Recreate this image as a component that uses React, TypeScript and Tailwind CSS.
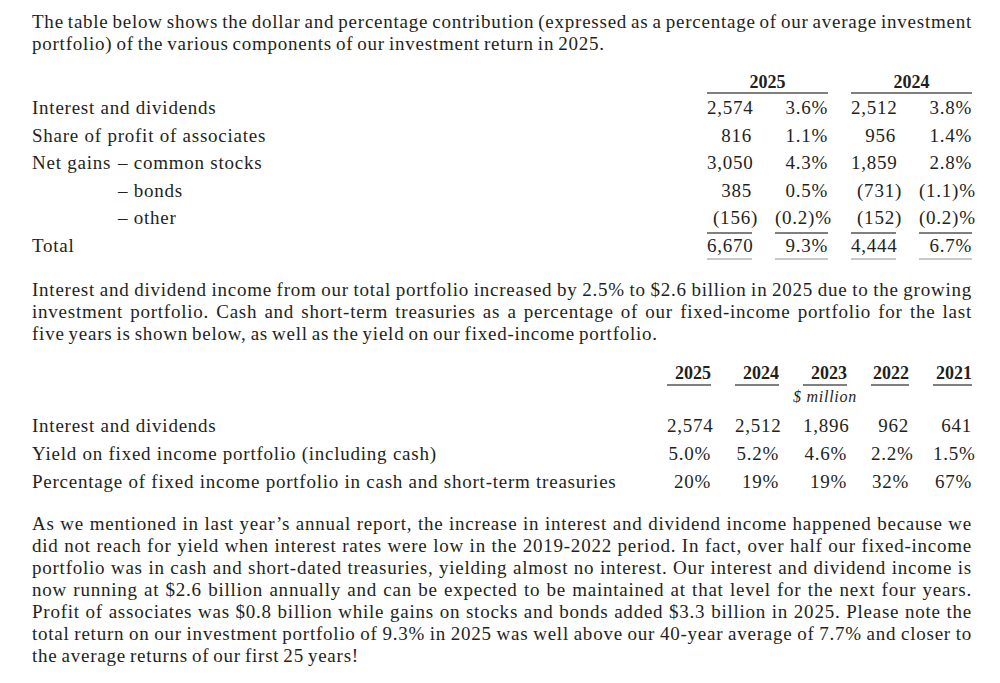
import React from "react";

const intro = [
  "The table below shows the dollar and percentage contribution (expressed as a percentage of our average investment",
  "portfolio) of the various components of our investment return in 2025.",
];

const middle = [
  "Interest and dividend income from our total portfolio increased by 2.5% to $2.6 billion in 2025 due to the growing",
  "investment portfolio. Cash and short-term treasuries as a percentage of our fixed-income portfolio for the last",
  "five years is shown below, as well as the yield on our fixed-income portfolio.",
];

const closing = [
  "As we mentioned in last year\u2019s annual report, the increase in interest and dividend income happened because we",
  "did not reach for yield when interest rates were low in the 2019-2022 period. In fact, over half our fixed-income",
  "portfolio was in cash and short-dated treasuries, yielding almost no interest. Our interest and dividend income is",
  "now running at $2.6 billion annually and can be expected to be maintained at that level for the next four years.",
  "Profit of associates was $0.8 billion while gains on stocks and bonds added $3.3 billion in 2025. Please note the",
  "total return on our investment portfolio of 9.3% in 2025 was well above our 40-year average of 7.7% and closer to",
  "the average returns of our first 25 years!",
];

const contribution = [
  { label: "Interest and dividends", indent: false, values: ["2,574", "3.6%", "2,512", "3.8%"] },
  { label: "Share of profit of associates", indent: false, values: ["816", "1.1%", "956", "1.4%"] },
  { label: "\u2013 common stocks", prefix: "Net gains", indent: false, values: ["3,050", "4.3%", "1,859", "2.8%"] },
  { label: "\u2013 bonds", indent: true, values: ["385", "0.5%", "(731)", "(1.1)%"] },
  { label: "\u2013 other", indent: true, values: ["(156)", "(0.2)%", "(152)", "(0.2)%"] },
];

const totals = ["6,670", "9.3%", "4,444", "6.7%"];

const years = ["2025", "2024", "2023", "2022", "2021"];

const fiveYear = [
  { label: "Interest and dividends", values: ["2,574", "2,512", "1,896", "962", "641"] },
  { label: "Yield on fixed income portfolio (including cash)", values: ["5.0%", "5.2%", "4.6%", "2.2%", "1.5%"] },
  {
    label: "Percentage of fixed income portfolio in cash and short-term treasuries",
    values: ["20%", "19%", "19%", "32%", "67%"],
  },
];

// brackets on amounts hang past the column edge, like the printed report
const Amount = ({ value }: { value: string }) => {
  if (value.startsWith("(") && value.endsWith(")")) {
    return (
      <>
        {value.slice(0, -1)}
        <span className="-mr-[6px]">)</span>
      </>
    );
  }
  return <>{value}</>;
};

const Paragraph = ({ lines, className }: { lines: string[]; className?: string }) => {
  return (
    <div className={`[word-spacing:-1.5px] ${className ?? ""}`}>
      {lines.map((line, i) => (
        <div
          key={i}
          className={
            i < lines.length - 1
              ? "whitespace-nowrap text-justify [text-align-last:justify]"
              : "whitespace-nowrap"
          }
        >
          {line}
        </div>
      ))}
    </div>
  );
};

const ContributionTable = () => {
  return (
    <div className="mt-[15px] grid grid-cols-[1fr_45px_53px_45px_53px] gap-x-[23px]">
      <div />
      <div className="col-span-2 border-b-2 border-[#7f7f7f] pt-[2px] text-center text-[18px] font-bold leading-[20px] tracking-normal">2025</div>
      <div className="col-span-2 border-b-2 border-[#7f7f7f] pt-[2px] text-center text-[18px] font-bold leading-[20px] tracking-normal">2024</div>

      {contribution.map((row) => (
        <React.Fragment key={row.label}>
          <div className="h-[27.5px] whitespace-nowrap leading-[27.5px]">
            {row.prefix ? (
              <span className="inline-block w-[86px]">{row.prefix}</span>
            ) : row.indent ? (
              <span className="inline-block w-[86px]" />
            ) : null}
            {row.label}
          </div>
          {row.values.map((v, i) => (
            <div key={i} className="h-[27.5px] whitespace-nowrap text-right leading-[27.5px]">
              {i % 2 === 0 ? <Amount value={v} /> : v}
            </div>
          ))}
        </React.Fragment>
      ))}

      <div className="h-[28px] leading-[28px]">Total</div>
      {totals.map((v) => (
        <div
          key={v}
          className="h-[28px] border-t-2 border-b-2 border-t-[#7f7f7f] border-b-[#c8c8c8] text-right leading-[24px]"
        >
          {v}
        </div>
      ))}
    </div>
  );
};

const FiveYearTable = () => {
  return (
    <div className="mt-[17px] grid grid-cols-[1fr_44px_44px_44px_38px_39px] gap-x-[24px]">
      <div />
      {years.map((y) => (
        <div key={y} className="border-b-2 border-[#7f7f7f] text-right text-[18px] font-bold leading-[22px] tracking-normal">
          {y}
        </div>
      ))}

      <div className="col-span-3" />
      <div className="flex justify-center whitespace-nowrap text-[16px] italic leading-[22px]">$ million</div>
      <div className="col-span-2" />

      {fiveYear.map((row, r) => (
        <React.Fragment key={row.label}>
          <div className={`h-[28px] whitespace-nowrap leading-[28px] ${r === 0 ? "mt-[4px]" : ""}`}>{row.label}</div>
          {row.values.map((v, i) => (
            <div
              key={i}
              className={`h-[28px] whitespace-nowrap text-right leading-[28px] ${r === 0 ? "mt-[4px]" : ""}`}
            >
              {v}
            </div>
          ))}
        </React.Fragment>
      ))}
    </div>
  );
};

export default function App() {
  return (
    <div className="min-h-screen bg-white pl-[32px] pr-[28px] pt-[11px] font-['Liberation_Serif',serif] text-[19px] leading-[22px] tracking-[0.04em] text-[#231f20]">
      <Paragraph lines={intro} />
      <ContributionTable />
      <Paragraph lines={middle} className="mt-[19px]" />
      <FiveYearTable />
      <Paragraph lines={closing} className="mt-[17px]" />
    </div>
  );
}
